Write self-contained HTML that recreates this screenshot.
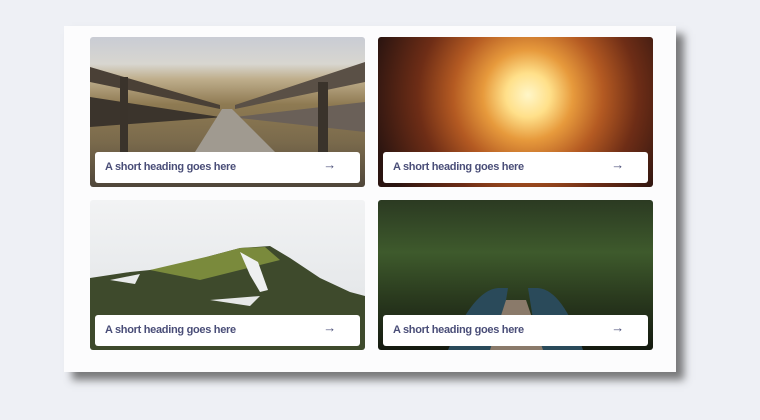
<!DOCTYPE html>
<html><head><style>
*{margin:0;padding:0;box-sizing:border-box}
body{width:760px;height:420px;background:#eef0f5;position:relative;overflow:hidden;font-family:"Liberation Sans",sans-serif}
.panel{position:absolute;left:64px;top:26px;width:612px;height:346px;background:#fcfcfd;box-shadow:8px 8px 8px rgba(70,70,70,.7)}
.card{position:absolute;width:275px;height:150px;border-radius:3px;overflow:hidden}
.cap{position:absolute;left:5px;top:115px;width:265px;height:31px;background:#fff;border-radius:3px;font-weight:bold;font-size:11px;color:#4a4e78;padding-left:10px;line-height:31px;letter-spacing:-.3px}
.cap span{position:absolute;right:24px;top:-3px;line-height:31px;font-weight:bold;font-size:13px}
</style></head><body>
<div class="panel"></div>
<div class="card" style="left:90px;top:37px;background:linear-gradient(180deg,#c9ccd4 0%,#d8d6d0 18%,#bfae8c 28%,#8e7a52 45%,#7a6a4c 70%,#4f463a 100%)">
<svg width="275" height="150" style="position:absolute;left:0;top:0"><polygon points="0,30 130,68 130,72 0,45" fill="#4a4036"/><polygon points="275,25 145,68 145,72 275,45" fill="#5a5046"/><polygon points="0,60 130,80 135,80 0,90" fill="#3b342c"/><polygon points="275,65 145,80 140,80 275,95" fill="#6a6058"/><polygon points="105,115 132,72 142,72 185,115" fill="#a09a90"/><rect x="30" y="40" width="8" height="75" fill="#3a332b"/><rect x="228" y="45" width="10" height="70" fill="#3a332b"/></svg>
<div class="cap">A short heading goes here<span>→</span></div></div>
<div class="card" style="left:378px;top:37px;background:radial-gradient(circle at 150px 58px,#fff6c8 0,#ffe08a 22px,#e79a3c 45px,#b45a22 75px,#6e2d16 110px,#2a1410 160px)">
<div class="cap">A short heading goes here<span>→</span></div></div>
<div class="card" style="left:90px;top:200px;background:linear-gradient(180deg,#f2f3f4 0%,#e8eaec 50%,#dfe2e4 100%)">
<svg width="275" height="150" style="position:absolute;left:0;top:0"><path d="M0,78 L40,72 L80,68 L120,56 L150,48 L180,46 L200,58 L230,78 L260,92 L275,96 L275,150 L0,150 Z" fill="#3e4a2c"/><path d="M60,70 L120,56 L150,48 L175,47 L190,60 L150,70 L110,80 Z" fill="#7a8a3c"/><path d="M150,52 L160,75 L170,92 L178,90 L168,62 Z" fill="#eef0f0"/><path d="M20,80 L50,74 L45,84 Z" fill="#e8eaea"/><path d="M120,100 L170,96 L160,106 Z" fill="#e6e8e8"/></svg>
<div class="cap">A short heading goes here<span>→</span></div></div>
<div class="card" style="left:378px;top:200px;background:linear-gradient(180deg,#2b3a22 0%,#3e5a2c 35%,#2a3a1e 65%,#141a10 100%)">
<svg width="275" height="150" style="position:absolute;left:0;top:0"><path d="M70,150 Q95,90 120,88 L130,88 L120,150 Z" fill="#2a4a5a"/><path d="M205,150 Q185,90 160,88 L150,88 L160,150 Z" fill="#2a4a5a"/><polygon points="112,150 128,100 148,100 165,150" fill="#8a7a6a"/></svg>
<div class="cap">A short heading goes here<span>→</span></div></div>
</body></html>
